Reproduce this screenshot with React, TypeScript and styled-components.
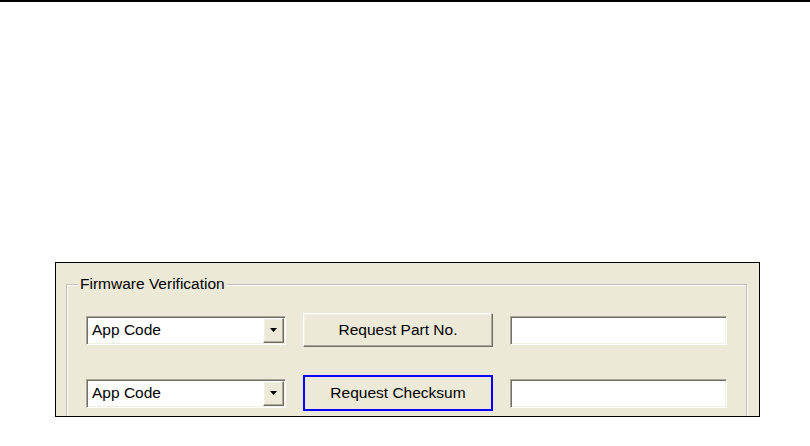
import React from "react";
import styled, { createGlobalStyle, css } from "styled-components";

const Global = createGlobalStyle`
  html, body { margin: 0; padding: 0; background: #fff; }
  body { font-family: "Liberation Sans", Arial, sans-serif; }
`;

const FONT = `15.5px "Liberation Sans", Arial, sans-serif`;

const sunken = css`
  box-sizing: border-box;
  border: 1px solid;
  border-color: #aca899 #ffffff #ffffff #aca899;
  box-shadow: inset 1px 1px 0 #716f64, inset -1px -1px 0 #f1efe2;
  background: #fff;
`;

const raised = css`
  border: 1px solid;
  border-color: #ffffff #716f64 #716f64 #ffffff;
  box-shadow: inset -1px -1px 0 #aca899, inset 1px 1px 0 #f1efe2;
  background: #ece9d8;
`;

const Page = styled.div`
  width: 810px;
  height: 446px;
  overflow: hidden;
  background: #fff;
`;

const TopRule = styled.div`
  height: 2px;
  background: #000;
`;

const Stage = styled.div`
  padding: 260px 0 0 55px;
`;

const Panel = styled.div`
  box-sizing: border-box;
  width: 705px;
  height: 155px;
  border: 1px solid #000;
  background: #ece9d8;
  overflow: hidden;
  padding: 21px 12px 0 10px;
`;

const GroupBox = styled.div`
  position: relative;
  box-sizing: border-box;
  height: 140px;
  border: 1px solid #c3bfb1;
  box-shadow: inset 1px 1px 0 #fff, 1px 1px 0 #fff;
  padding: 28px 0 0 19px;
`;

const Legend = styled.span`
  position: absolute;
  top: -10px;
  left: 11px;
  padding: 0 2px;
  background: #ece9d8;
  font: ${FONT};
  line-height: 18px;
  color: #000;
`;

const Rows = styled.div`
  display: grid;
  grid-template-columns: 200px 190px 217px;
  grid-auto-rows: 34px;
  column-gap: 17px;
  row-gap: 29px;
  align-items: center;
`;

const Combo = styled.div`
  ${sunken};
  height: 29px;
  padding: 1px;
  display: flex;
  align-items: stretch;
`;

const ComboText = styled.span`
  flex: 1;
  display: flex;
  align-items: center;
  padding-left: 4px;
  font: ${FONT};
  color: #000;
`;

const DropButton = styled.span`
  ${raised};
  box-sizing: border-box;
  width: 21px;
  display: flex;
  align-items: center;
  justify-content: center;
`;

const Button = styled.button<{ $focused?: boolean }>`
  box-sizing: border-box;
  width: 100%;
  height: 34px;
  margin: 0;
  padding: 0;
  font: ${FONT};
  color: #000;
  ${raised};
  ${(p) =>
    p.$focused &&
    css`
      height: 36px;
      border: 2px solid #0000ff;
      box-shadow: none;
    `}
`;

const Field = styled.div`
  ${sunken};
  height: 29px;
`;

const Arrow = () => (
  <svg width="7" height="4" viewBox="0 0 7 4">
    <polygon points="0,0 7,0 3.5,4" fill="#000" />
  </svg>
);

const ComboBox = ({ value }: { value: string }) => (
  <Combo>
    <ComboText>{value}</ComboText>
    <DropButton>
      <Arrow />
    </DropButton>
  </Combo>
);

export default function App() {
  return (
    <Page>
      <Global />
      <TopRule />
      <Stage>
        <Panel>
          <GroupBox>
            <Legend>Firmware Verification</Legend>
            <Rows>
              <ComboBox value="App Code" />
              <Button>Request Part No.</Button>
              <Field />
              <ComboBox value="App Code" />
              <Button $focused>Request Checksum</Button>
              <Field />
            </Rows>
          </GroupBox>
        </Panel>
      </Stage>
    </Page>
  );
}
